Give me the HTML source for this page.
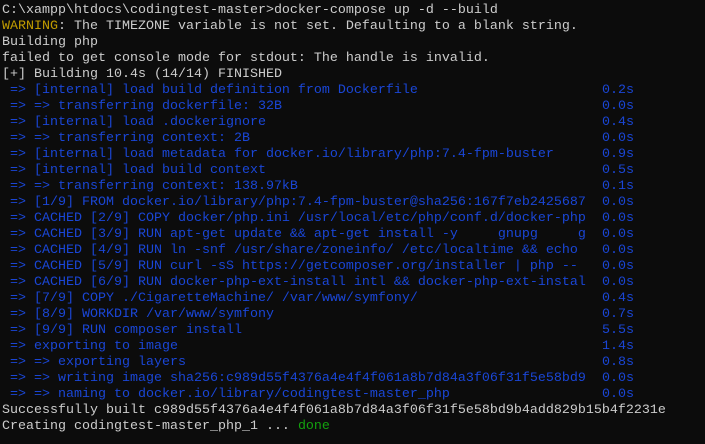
<!DOCTYPE html>
<html><head><meta charset="utf-8"><style>
html,body{margin:0;padding:0;background:#0c0c0c;width:705px;height:444px;overflow:hidden}
#t{position:absolute;left:2px;top:3px;font-family:"Liberation Mono",monospace;font-size:13.33px;line-height:16px;color:#cccccc;white-space:pre}
.l{position:relative;height:16px}
.b{color:#1a46d6}
.y{color:#c19c00}
.g{color:#13a10e}
.s{position:absolute;left:600px;top:0}
</style></head><body><div id="t"><div class="l">C:\xampp\htdocs\codingtest-master&gt;docker-compose up -d --build</div><div class="l"><span class="y">WARNING</span>: The TIMEZONE variable is not set. Defaulting to a blank string.</div><div class="l">Building php</div><div class="l">failed to get console mode for stdout: The handle is invalid.</div><div class="l">[+] Building 10.4s (14/14) FINISHED</div><div class="l b"> =&gt; [internal] load build definition from Dockerfile<span class="s">0.2s</span></div><div class="l b"> =&gt; =&gt; transferring dockerfile: 32B<span class="s">0.0s</span></div><div class="l b"> =&gt; [internal] load .dockerignore<span class="s">0.4s</span></div><div class="l b"> =&gt; =&gt; transferring context: 2B<span class="s">0.0s</span></div><div class="l b"> =&gt; [internal] load metadata for docker.io/library/php:7.4-fpm-buster<span class="s">0.9s</span></div><div class="l b"> =&gt; [internal] load build context<span class="s">0.5s</span></div><div class="l b"> =&gt; =&gt; transferring context: 138.97kB<span class="s">0.1s</span></div><div class="l b"> =&gt; [1/9] FROM docker.io/library/php:7.4-fpm-buster@sha256:167f7eb2425687<span class="s">0.0s</span></div><div class="l b"> =&gt; CACHED [2/9] COPY docker/php.ini /usr/local/etc/php/conf.d/docker-php<span class="s">0.0s</span></div><div class="l b"> =&gt; CACHED [3/9] RUN apt-get update &amp;&amp; apt-get install -y     gnupg     g<span class="s">0.0s</span></div><div class="l b"> =&gt; CACHED [4/9] RUN ln -snf /usr/share/zoneinfo/ /etc/localtime &amp;&amp; echo<span class="s">0.0s</span></div><div class="l b"> =&gt; CACHED [5/9] RUN curl -sS https://getcomposer.org/installer | php --<span class="s">0.0s</span></div><div class="l b"> =&gt; CACHED [6/9] RUN docker-php-ext-install intl &amp;&amp; docker-php-ext-instal<span class="s">0.0s</span></div><div class="l b"> =&gt; [7/9] COPY ./CigaretteMachine/ /var/www/symfony/<span class="s">0.4s</span></div><div class="l b"> =&gt; [8/9] WORKDIR /var/www/symfony<span class="s">0.7s</span></div><div class="l b"> =&gt; [9/9] RUN composer install<span class="s">5.5s</span></div><div class="l b"> =&gt; exporting to image<span class="s">1.4s</span></div><div class="l b"> =&gt; =&gt; exporting layers<span class="s">0.8s</span></div><div class="l b"> =&gt; =&gt; writing image sha256:c989d55f4376a4e4f4f061a8b7d84a3f06f31f5e58bd9<span class="s">0.0s</span></div><div class="l b"> =&gt; =&gt; naming to docker.io/library/codingtest-master_php<span class="s">0.0s</span></div><div class="l">Successfully built c989d55f4376a4e4f4f061a8b7d84a3f06f31f5e58bd9b4add829b15b4f2231e</div><div class="l">Creating codingtest-master_php_1 ... <span class="g">done</span></div></div></body></html>
